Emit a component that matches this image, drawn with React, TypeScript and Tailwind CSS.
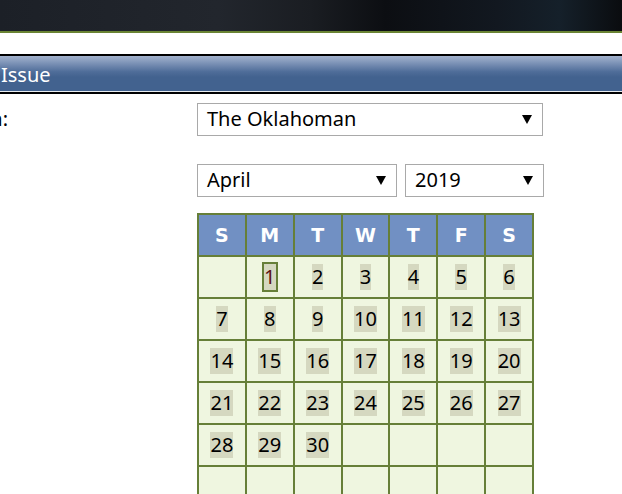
import React from "react";

const WEEKDAYS = ["S", "M", "T", "W", "T", "F", "S"];

// April 2019 starts on a Monday; six rows like the original grid
const CELLS: (number | null)[] = [
  null, 1, 2, 3, 4, 5, 6,
  7, 8, 9, 10, 11, 12, 13,
  14, 15, 16, 17, 18, 19, 20,
  21, 22, 23, 24, 25, 26, 27,
  28, 29, 30, null, null, null, null,
  null, null, null, null, null, null, null,
];

const SELECTED = 1;

function Arrow() {
  return (
    <svg width="10" height="9" viewBox="0 0 10 9" className="shrink-0">
      <path d="M0 0 H10 L5 9 Z" fill="#000" />
    </svg>
  );
}

function FakeSelect({ value, width }: { value: string; width: string }) {
  return (
    <div
      className={`${width} h-[33px] border border-[#a9a9a9] bg-white flex items-center justify-between pl-[9px] pr-[10px] text-[20px] text-black`}
    >
      <span className="leading-none pb-[2px]">{value}</span>
      <Arrow />
    </div>
  );
}

export default function App() {
  return (
    <div
      className="w-[622px] h-[494px] overflow-hidden bg-white"
      style={{ fontFamily: '"Noto Sans", "Open Sans", sans-serif' }}
    >
      {/* Site header strip */}
      <div className="h-[31px] bg-[linear-gradient(90deg,#1c2027_0%,#22262d_35%,#1a1d22_50%,#0c0e12_62%,#121820_80%,#15202a_90%,#0a0c0f_100%)]" />
      <div className="h-[2px] bg-[#6a8434]" />

      <div className="h-[21px]" />

      {/* Section title bar */}
      <div className="h-[2px] bg-black" />
      <div className="h-[35px] bg-[linear-gradient(180deg,#a3b3cd_0%,#7d93b7_20%,#4f6d99_45%,#42628f_60%,#42628f_100%)] flex items-center">
        <span className="text-white text-[20px] leading-none pl-px pt-[2px]">Issue</span>
      </div>
      <div className="h-px bg-[#e8ecef]" />
      <div className="h-[2px] bg-black" />

      {/* Form */}
      <div className="grid grid-cols-[197px_1fr] mt-[9px]">
        <div className="h-[33px] w-[8px] flex justify-end items-center whitespace-nowrap text-[20px] text-black">
          <span className="leading-none pb-[2px]">Publication:</span>
        </div>
        <FakeSelect value="The Oklahoman" width="w-[346px]" />

        <div />
        <div className="flex gap-[8px] mt-[28px]">
          <FakeSelect value="April" width="w-[200px]" />
          <FakeSelect value="2019" width="w-[139px]" />
        </div>

        <div />
        <div className="mt-[16px] w-[337px] grid grid-cols-7 gap-[2px] p-[2px] bg-[#667f38] auto-rows-[40px]">
          {WEEKDAYS.map((d, i) => (
            <div
              key={i}
              className="bg-[#7190c3] flex items-center justify-center text-white font-bold text-[19px]"
              style={{ fontFamily: '"DejaVu Sans", Verdana, sans-serif' }}
            >
              {d}
            </div>
          ))}
          {CELLS.map((n, i) => (
            <div key={i} className="bg-[#eff6e0] flex items-center justify-center">
              {n !== null &&
                (n === SELECTED ? (
                  <span className="border-2 border-[#667f38] bg-[#d5d8c0] text-[#5a1212] text-[20px] leading-[26px]">
                    {n}
                  </span>
                ) : (
                  <span className="bg-[#d5d8c0] text-black text-[20px] leading-[26px]">{n}</span>
                ))}
            </div>
          ))}
        </div>
      </div>
    </div>
  );
}
